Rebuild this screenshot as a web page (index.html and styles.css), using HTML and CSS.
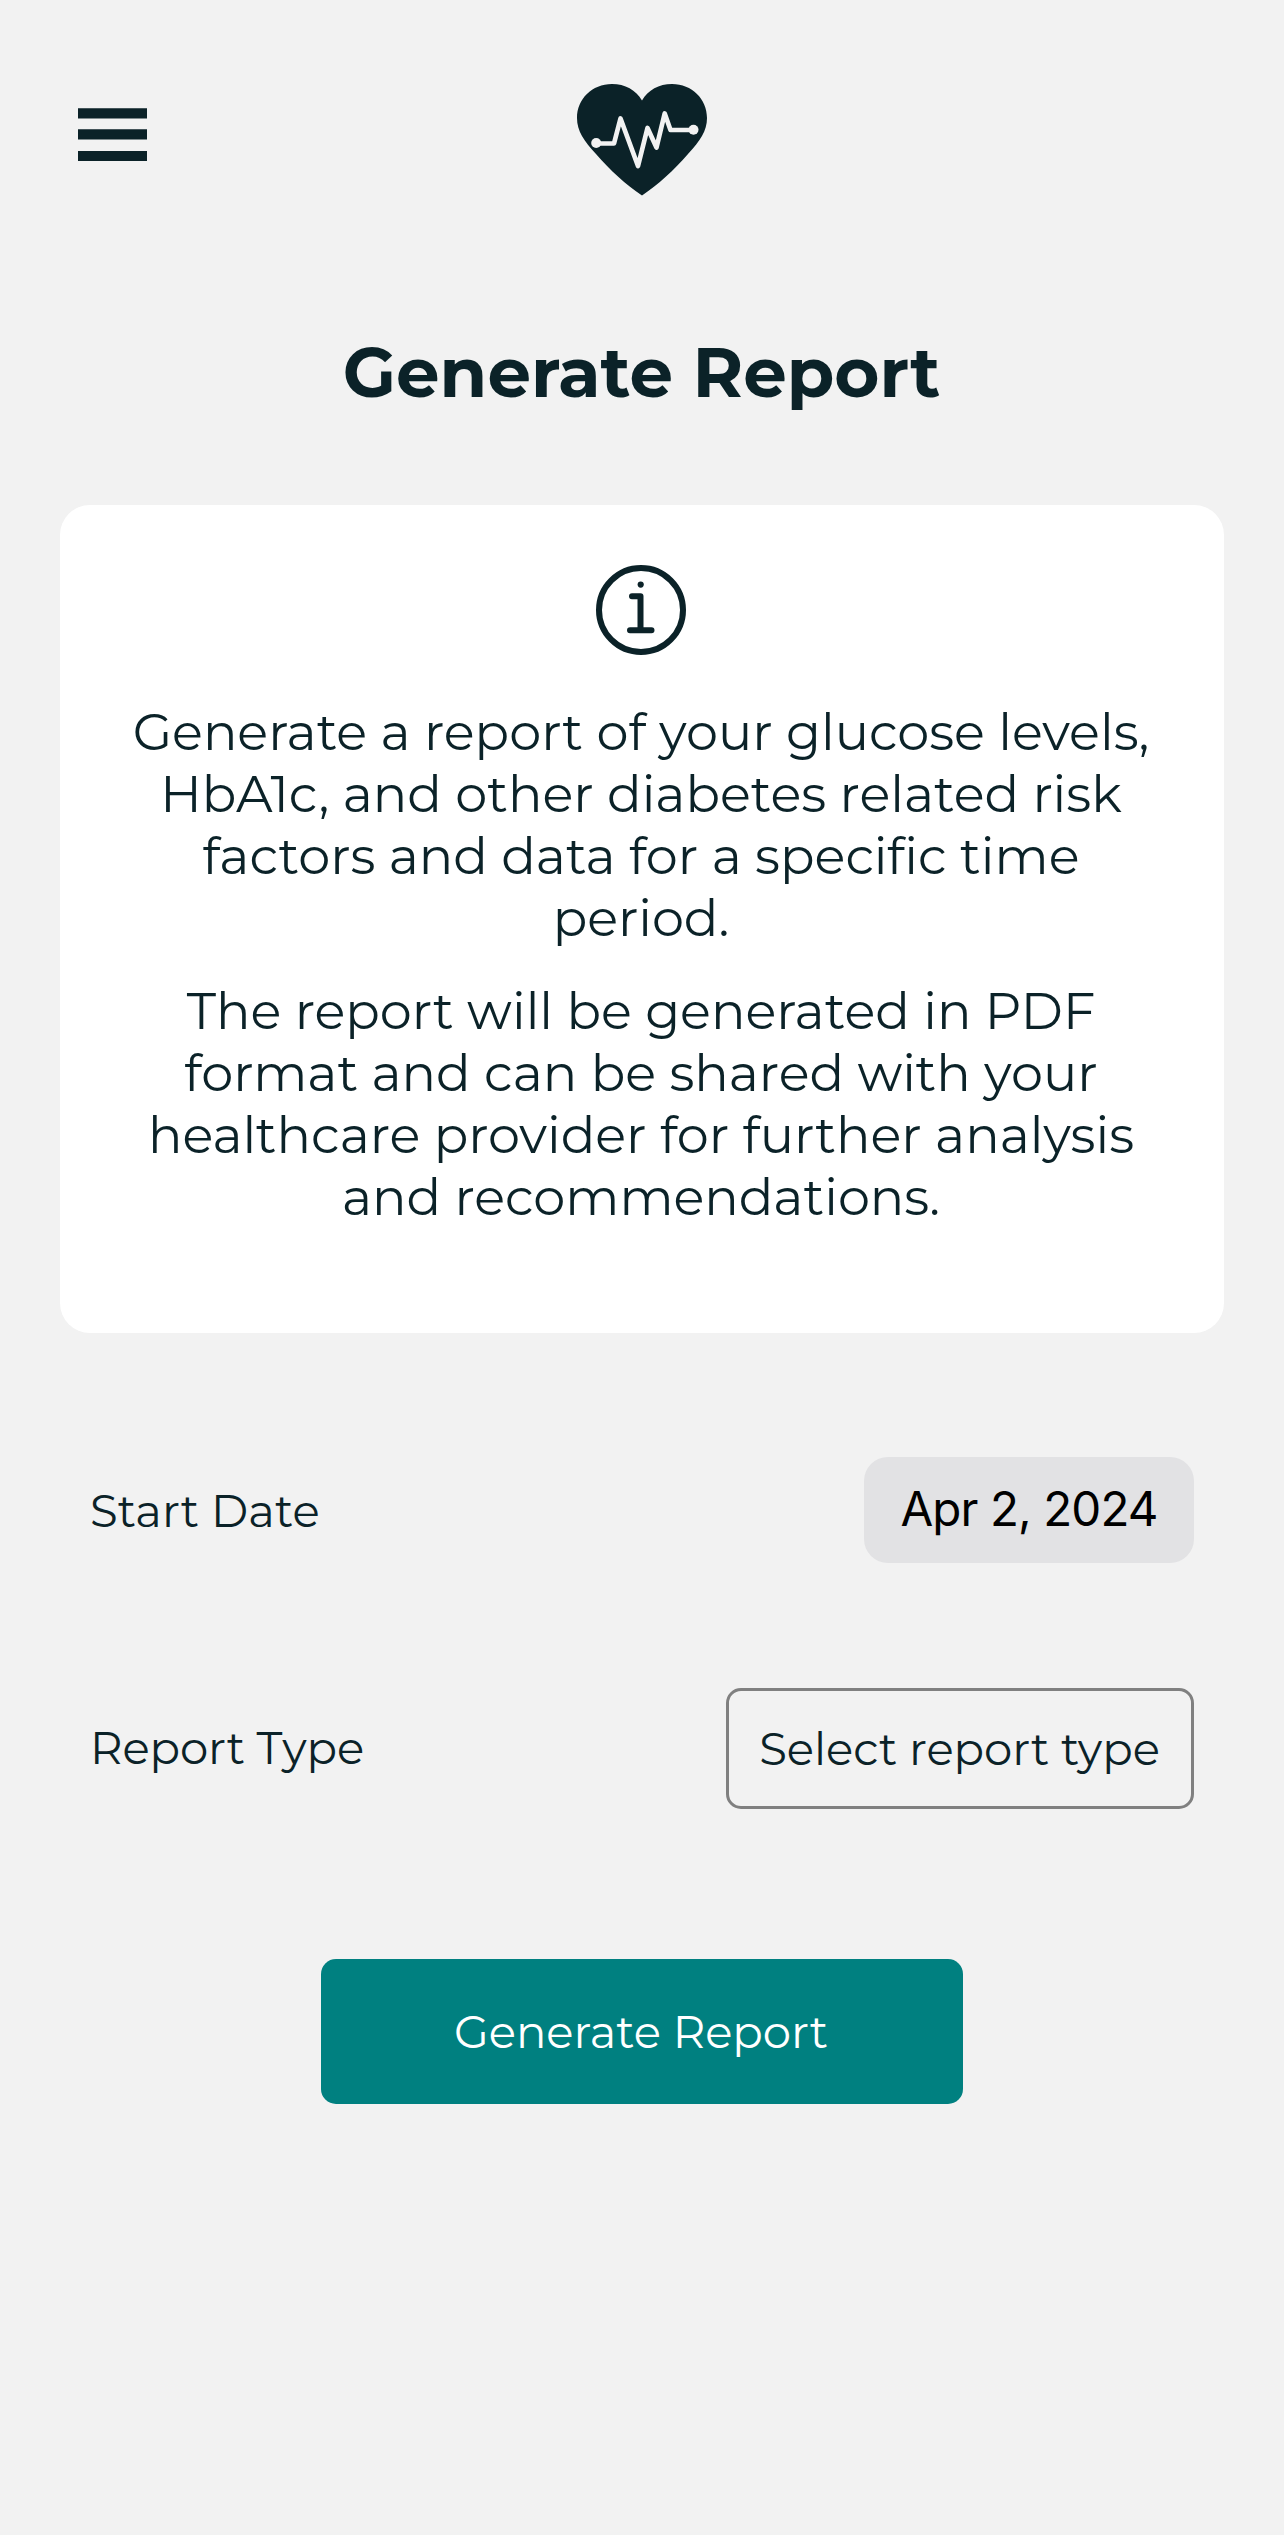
FILE: index.html
```html
<!DOCTYPE html>
<html lang="en">
<head>
<meta charset="utf-8">
<title>Generate Report</title>
<link rel="stylesheet" href="styles.css">
</head>
<body>
<header class="header">
  <button class="menu" aria-label="Menu">
    <svg width="69" height="53" viewBox="0 0 69 53" fill="currentColor"><path d="M0 .3h69v10.2H0zM0 21.3h69v10.2H0zM0 43h69v10H0z"/></svg>
  </button>
  <svg class="logo" width="130" height="112" viewBox="0 0 130 112">
    <path fill="#0b2228" d="M65 16.500C71 6 82 0 95 0C115 0 130 15 130 34C130 47 123 57 111 70C97 86 81 101 65 111.500C49 101 33 86 19 70C7 57 0 47 0 34C0 15 15 0 35 0C48 0 59 6 65 16.500Z"/>
    <path fill="none" stroke="#f2f2f2" stroke-width="4.700" stroke-linejoin="round" stroke-linecap="round" d="M19 59.500H37L43.500 34.500L61 82L70.500 44L79.500 63.500L87.700 29.500L93.500 46H116.500"/>
    <circle cx="19.200" cy="59" r="5" fill="#f2f2f2"/>
    <circle cx="116.500" cy="45.700" r="5" fill="#f2f2f2"/>
  </svg>
</header>
<main class="main">
  <h1 class="title">Generate Report</h1>
  <section class="card">
    <svg class="info" width="90" height="90" viewBox="0 0 90 90" fill="none" stroke="currentColor" stroke-width="6" stroke-linecap="round" stroke-linejoin="round">
      <circle cx="45" cy="45" r="42"/>
      <path d="M36 31.300h8.500v34M34 65.300h21.500"/>
      <circle cx="44.700" cy="19.600" r="3.100" fill="currentColor" stroke="none"/>
    </svg>
    <p class="text">Generate a report of your glucose levels, HbA1c, and other diabetes related risk factors and data for a specific time period.</p>
    <p class="text">The report will be generated in PDF format and can be shared with your healthcare provider for further analysis and recommendations.</p>
  </section>
  <div class="row row-date">
    <span class="label">Start Date</span>
    <button class="date">Apr 2, 2024</button>
  </div>
  <div class="row row-type">
    <span class="label">Report Type</span>
    <button class="select">Select report type</button>
  </div>
  <button class="submit">Generate Report</button>
</main>
</body>
</html>
```
FILE: styles.css
```css
* { box-sizing: border-box; }
body {
  margin: 0;
  min-height: 2535px;
  background: #f2f2f2;
  color: #0b2228;
  font-family: Montserrat, Inter, sans-serif;
  font-size: 45px;
  line-height: 55px;
}
button {
  border: 0;
  padding: 0;
  background: none;
  color: inherit;
  font: inherit;
}
svg { display: block; }
.header {
  display: grid;
  grid-template-columns: 1fr auto 1fr;
  align-items: start;
  padding: 84px 78px 0;
  height: 330px;
}
.menu { justify-self: start; margin-top: 24px; }
.main {
  display: flex;
  flex-direction: column;
  align-items: center;
}
.title {
  margin: 0 0 91px;
  padding-right: 1px;
  font-size: 69px;
  line-height: 84px;
  font-weight: 700;
}
.card {
  display: flex;
  flex-direction: column;
  align-items: center;
  gap: 31px;
  width: 1164px;
  height: 828px;
  padding: 60px 62px 0 60px;
  border-radius: 30px;
  background: #fff;
  text-align: center;
}
.info { margin-bottom: 15px; }
.text {
  margin: 0;
  font-size: 51px;
  line-height: 62px;
}
.row {
  display: flex;
  justify-content: space-between;
  align-items: center;
  width: 1104px;
}
.row-date { margin-top: 124px; }
.row-date .label { letter-spacing: 0.1px; }
.row-type { margin-top: 125px; }
.row-type .label { padding-bottom: 2px; letter-spacing: -0.1px; }
.date {
  width: 330px;
  height: 106px;
  padding-bottom: 3px;
  border-radius: 24px;
  background: #e2e2e4;
  color: #000;
  font-family: Inter, sans-serif;
  font-size: 47.5px;
  letter-spacing: -0.9px;
}
.select {
  width: 468px;
  height: 121px;
  padding-right: 1px;
  border: 3px solid #808080;
  border-radius: 15px;
}
.submit {
  width: 642px;
  height: 145px;
  margin-top: 150px;
  padding-right: 2px;
  border-radius: 15px;
  background: #008080;
  color: #fff;
}
```
